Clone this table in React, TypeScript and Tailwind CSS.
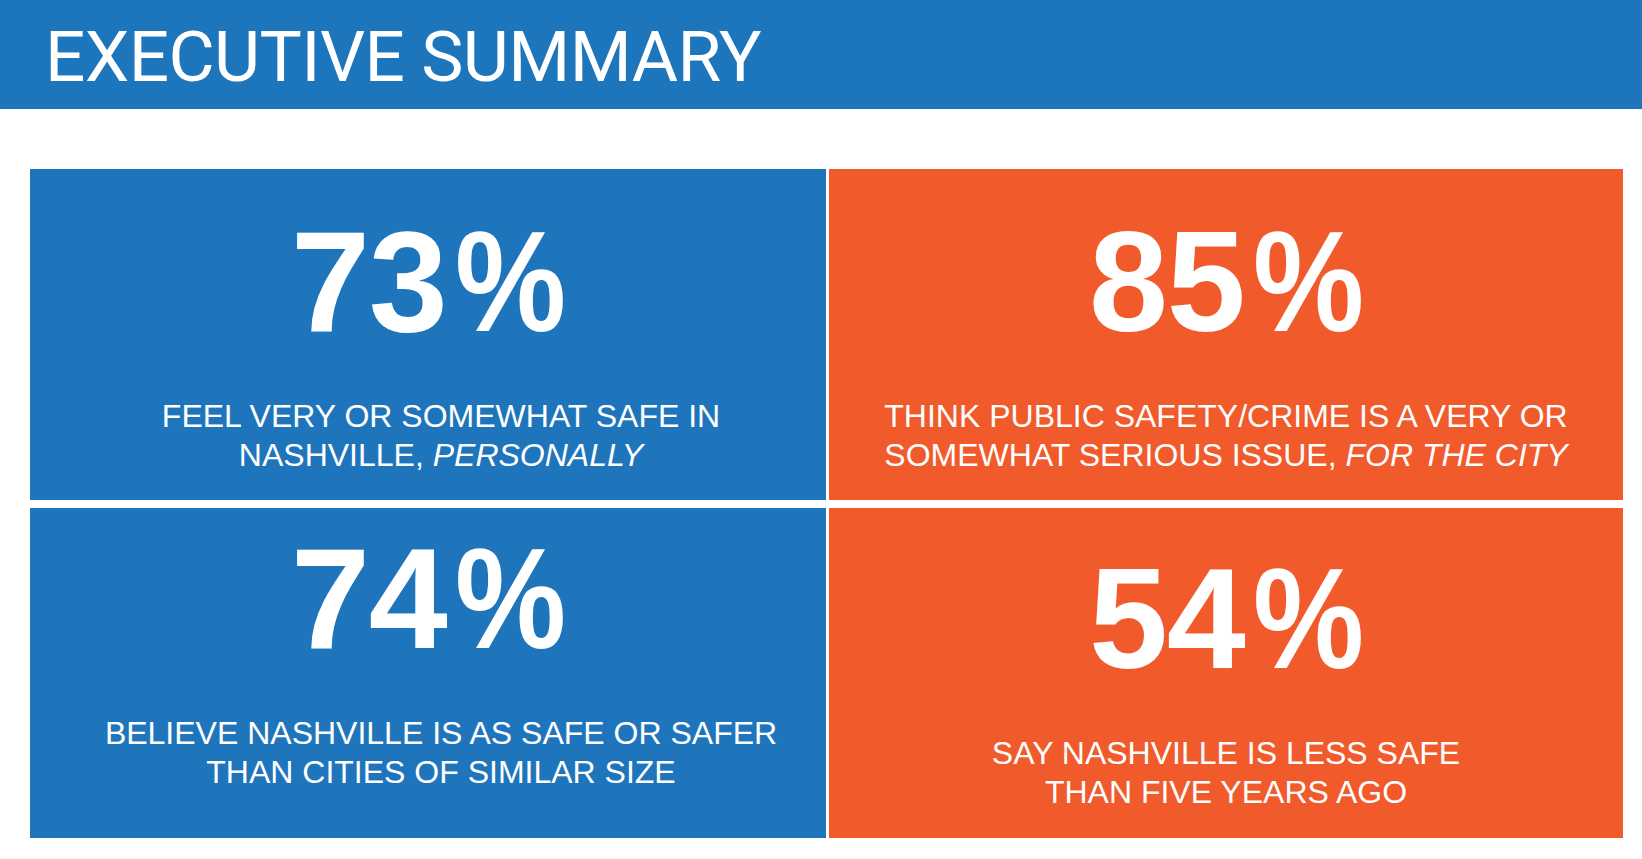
const stats = [
  {
    value: '73',
    lines: ['FEEL VERY OR SOMEWHAT SAFE IN', 'NASHVILLE, '],
    em: 'PERSONALLY',
    bg: 'bg-[#1f75bc]',
    pad: 'pt-[42px]',
    shift: 'pl-[26px]',
  },
  {
    value: '85',
    lines: ['THINK PUBLIC SAFETY/CRIME IS A VERY OR', 'SOMEWHAT SERIOUS ISSUE, '],
    em: 'FOR THE CITY',
    bg: 'bg-[#f15a2b]',
    pad: 'pt-[42px]',
    shift: '',
  },
  {
    value: '74',
    lines: ['BELIEVE NASHVILLE IS AS SAFE OR SAFER', 'THAN CITIES OF SIMILAR SIZE'],
    em: '',
    bg: 'bg-[#1f75bc]',
    pad: 'pt-[20px]',
    shift: 'pl-[26px]',
  },
  {
    value: '54',
    lines: ['SAY NASHVILLE IS LESS SAFE', 'THAN FIVE YEARS AGO'],
    em: '',
    bg: 'bg-[#f15a2b]',
    pad: 'pt-[40px]',
    shift: '',
  },
];

export default function App() {
  return (
    <div className="h-[859px] w-[1642px] overflow-hidden bg-white">
      <header className="h-[109px] bg-[#1d75bc] pl-[45px] pt-[21px]">
        <h1 className="text-[71px] leading-none tracking-[-0.6px] text-white [font-family:Roboto,'Noto_Sans',sans-serif]">
          EXECUTIVE SUMMARY
        </h1>
      </header>

      <div className="ml-[30px] mt-[60px] grid grid-cols-[796px_794px] grid-rows-[331px_330px] gap-x-[3px] gap-y-[8px]">
        {stats.map((s) => (
          <div
            key={s.value}
            className={`flex flex-col items-center text-white [font-family:'Liberation_Sans',Arial,sans-serif] ${s.bg} ${s.pad}`}
          >
            <div className="text-[142px] font-bold leading-none tracking-[-1px]">
              {s.value}
              <span className="ml-[8px] -mr-[15px] inline-block origin-left scale-x-[0.88]">%</span>
            </div>
            <p className={`mt-[44px] text-center text-[32px] leading-[39px] ${s.shift}`}>
              {s.lines[0]}
              <br />
              {s.lines[1]}
              {s.em && <em>{s.em}</em>}
            </p>
          </div>
        ))}
      </div>
    </div>
  );
}
